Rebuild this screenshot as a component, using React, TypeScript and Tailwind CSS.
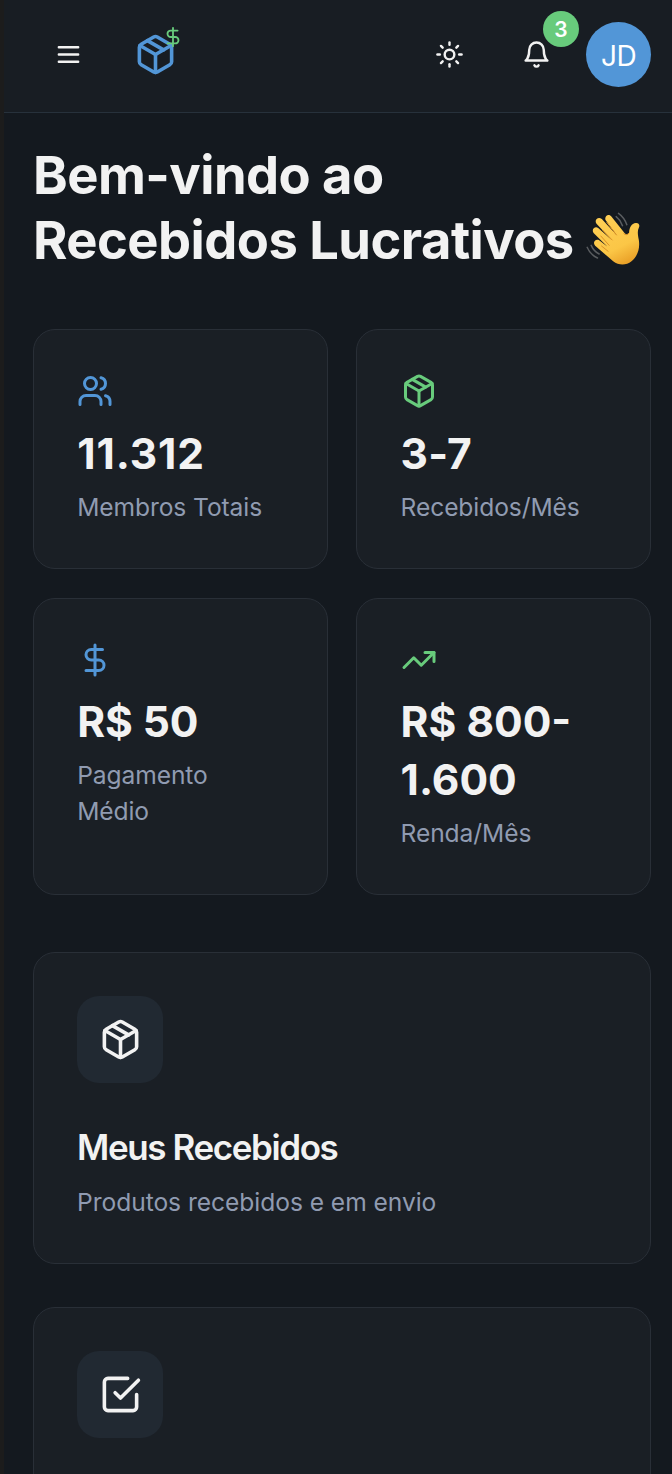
import type { ReactNode } from 'react'
import { DollarSign, Package, Sun, TrendingUp, Users } from 'lucide-react'

const strokeProps = {
  viewBox: '0 0 24 24',
  fill: 'none',
  stroke: 'currentColor',
  strokeWidth: 2,
  strokeLinecap: 'round',
  strokeLinejoin: 'round',
} as const

function MenuIcon({ className }: { className?: string }) {
  return (
    <svg {...strokeProps} className={className}>
      <path d="M4 6h16M4 12h16M4 18h16" />
    </svg>
  )
}

function BellIcon({ className }: { className?: string }) {
  return (
    <svg {...strokeProps} className={className}>
      <path d="M6 8a6 6 0 0 1 12 0c0 7 3 9 3 9H3s3-2 3-9" />
      <path d="M10.3 21a1.94 1.94 0 0 0 3.4 0" />
    </svg>
  )
}

function CheckSquareIcon({ className }: { className?: string }) {
  return (
    <svg {...strokeProps} className={className}>
      <path d="m9 11 3 3L22 4" />
      <path d="M21 12v7a2 2 0 0 1-2 2H5a2 2 0 0 1-2-2V5a2 2 0 0 1 2-2h11" />
    </svg>
  )
}

function WavingHand({ className }: { className?: string }) {
  return (
    <svg viewBox="48 33 164 165" fill="none" className={className}>
      <defs>
        <linearGradient id="skin" x1="90" y1="50" x2="165" y2="198" gradientUnits="userSpaceOnUse">
          <stop offset="0" stopColor="#ffcf55" />
          <stop offset="0.65" stopColor="#fbc646" />
          <stop offset="1" stopColor="#e89d25" />
        </linearGradient>
      </defs>
      <g stroke="#5a5d60" strokeWidth="4.5" strokeLinecap="round">
        <path d="M145 40q17 12 25 34M138 50q13 10 19 27" />
        <path d="M51 142q9 22 31 32M63 136q8 18 24 26" />
      </g>
      <path
        fill="url(#skin)"
        d="M106 60C102 48 115 39 123 49L163 99C169 106 176 104 177 95C178 83 184 70 197 69C206 68 210 76 206 83C201 93 203 105 206 120C210 146 202 169 184 184C168 197 146 197 129 184L75 137C66 128 76 115 87 121L112 140L71 100C62 90 74 77 84 84L124 119L79 71C71 60 84 48 95 57L139 105Z"
      />
      <g stroke="#dc9428" strokeWidth="3" strokeLinecap="round">
        <path d="M110 67l29 38M98 91l28 29M92 108l25 28M94 138l20 16" />
        <path d="M161 101q8 8 16-2" />
      </g>
    </svg>
  )
}

const stats = [
  { icon: Users, value: '11.312', label: 'Membros Totais', color: 'text-[#5296d7]', tracking: 'tracking-[0.9px]' },
  { icon: Package, value: '3-7', label: 'Recebidos/Mês', color: 'text-[#68cb7c]', tracking: 'tracking-[0.2px]' },
  { icon: DollarSign, value: 'R$ 50', label: 'Pagamento Médio', color: 'text-[#5296d7]', tracking: 'tracking-[-0.1px]' },
  { icon: TrendingUp, value: 'R$ 800-1.600', label: 'Renda/Mês', color: 'text-[#68cb7c]', tracking: 'tracking-normal' },
]

function IconTile({ children }: { children: ReactNode }) {
  return (
    <div className="flex h-[87px] w-[86px] items-center justify-center rounded-[22px] bg-[#212932]">
      {children}
    </div>
  )
}

export default function App() {
  return (
    <div className="h-[1474px] overflow-hidden border-l-4 border-[#1c1c1c] bg-[#14191f] font-['Inter',sans-serif] text-[#f2f2f2]">
      {/* Header */}
      <header className="flex h-[113px] items-center border-b border-[#27313b] bg-[#181d23] pr-[21px] pb-[3px] pl-[50px]">
        <button className="flex size-[29px] items-center justify-center">
          <MenuIcon className="size-[29px]" />
        </button>
        <div className="relative ml-[51px] size-[43px]">
          <Package className="size-[43px] text-[#5296d7]" />
          <DollarSign className="absolute -top-[7px] -right-[7px] size-[22px] text-[#68cb7c]" />
        </div>
        <div className="ml-auto flex items-center">
          <button>
            <Sun className="size-[29px]" />
          </button>
          <button className="relative ml-[58px]">
            <BellIcon className="size-[29px]" />
            <span className="absolute -top-[29px] left-[21px] flex size-9 items-center justify-center rounded-full bg-[#68cb7c] pt-px text-[21px] font-semibold text-white">
              3
            </span>
          </button>
          <div className="ml-[35px] flex size-[65px] items-center justify-center rounded-full bg-[#5296d7] pt-0.5 text-[28px] tracking-[-0.6px] text-white">
            JD
          </div>
        </div>
      </header>

      <main className="pt-[29.5px] pr-[21px] pl-[29px]">
        <h1 className="text-[52.5px] leading-[65px] font-bold tracking-[-0.55px] whitespace-nowrap">
          Bem-vindo ao
          <br />
          Recebidos Lucrativos <WavingHand className="-mt-3 inline-block size-[55px]" />
        </h1>

        {/* Stats */}
        <div className="mt-[56.8px] grid grid-cols-2 gap-[28.8px]">
          {stats.map(stat => (
            <div key={stat.label} className="rounded-[22px] border border-[#292f37] bg-[#1a1f25] p-[43.2px]">
              <stat.icon className={`size-9 ${stat.color}`} />
              <p className={`mt-[15.4px] text-[42.5px] leading-[57.6px] font-bold ${stat.tracking}`}>{stat.value}</p>
              <p className="mt-[6.4px] text-[24.6px] leading-9 tracking-[-0.1px] text-[#909bb1]">{stat.label}</p>
            </div>
          ))}
        </div>

        {/* Actions */}
        <div className="mt-[56.8px] flex flex-col gap-[43px]">
          <div className="h-[312px] rounded-[22px] border border-[#292f37] bg-[#1a1f25] p-[43px]">
            <IconTile>
              <Package className="size-[43px]" />
            </IconTile>
            <h3 className="mt-[43px] text-[35px] leading-[43px] font-semibold tracking-[-1.4px]">Meus Recebidos</h3>
            <p className="mt-[15px] text-[24.6px] leading-9 tracking-[-0.05px] text-[#909bb1]">Produtos recebidos e em envio</p>
          </div>
          <div className="h-[312px] rounded-[22px] border border-[#292f37] bg-[#1a1f25] p-[43px]">
            <IconTile>
              <CheckSquareIcon className="size-[43px]" />
            </IconTile>
          </div>
        </div>
      </main>
    </div>
  )
}
